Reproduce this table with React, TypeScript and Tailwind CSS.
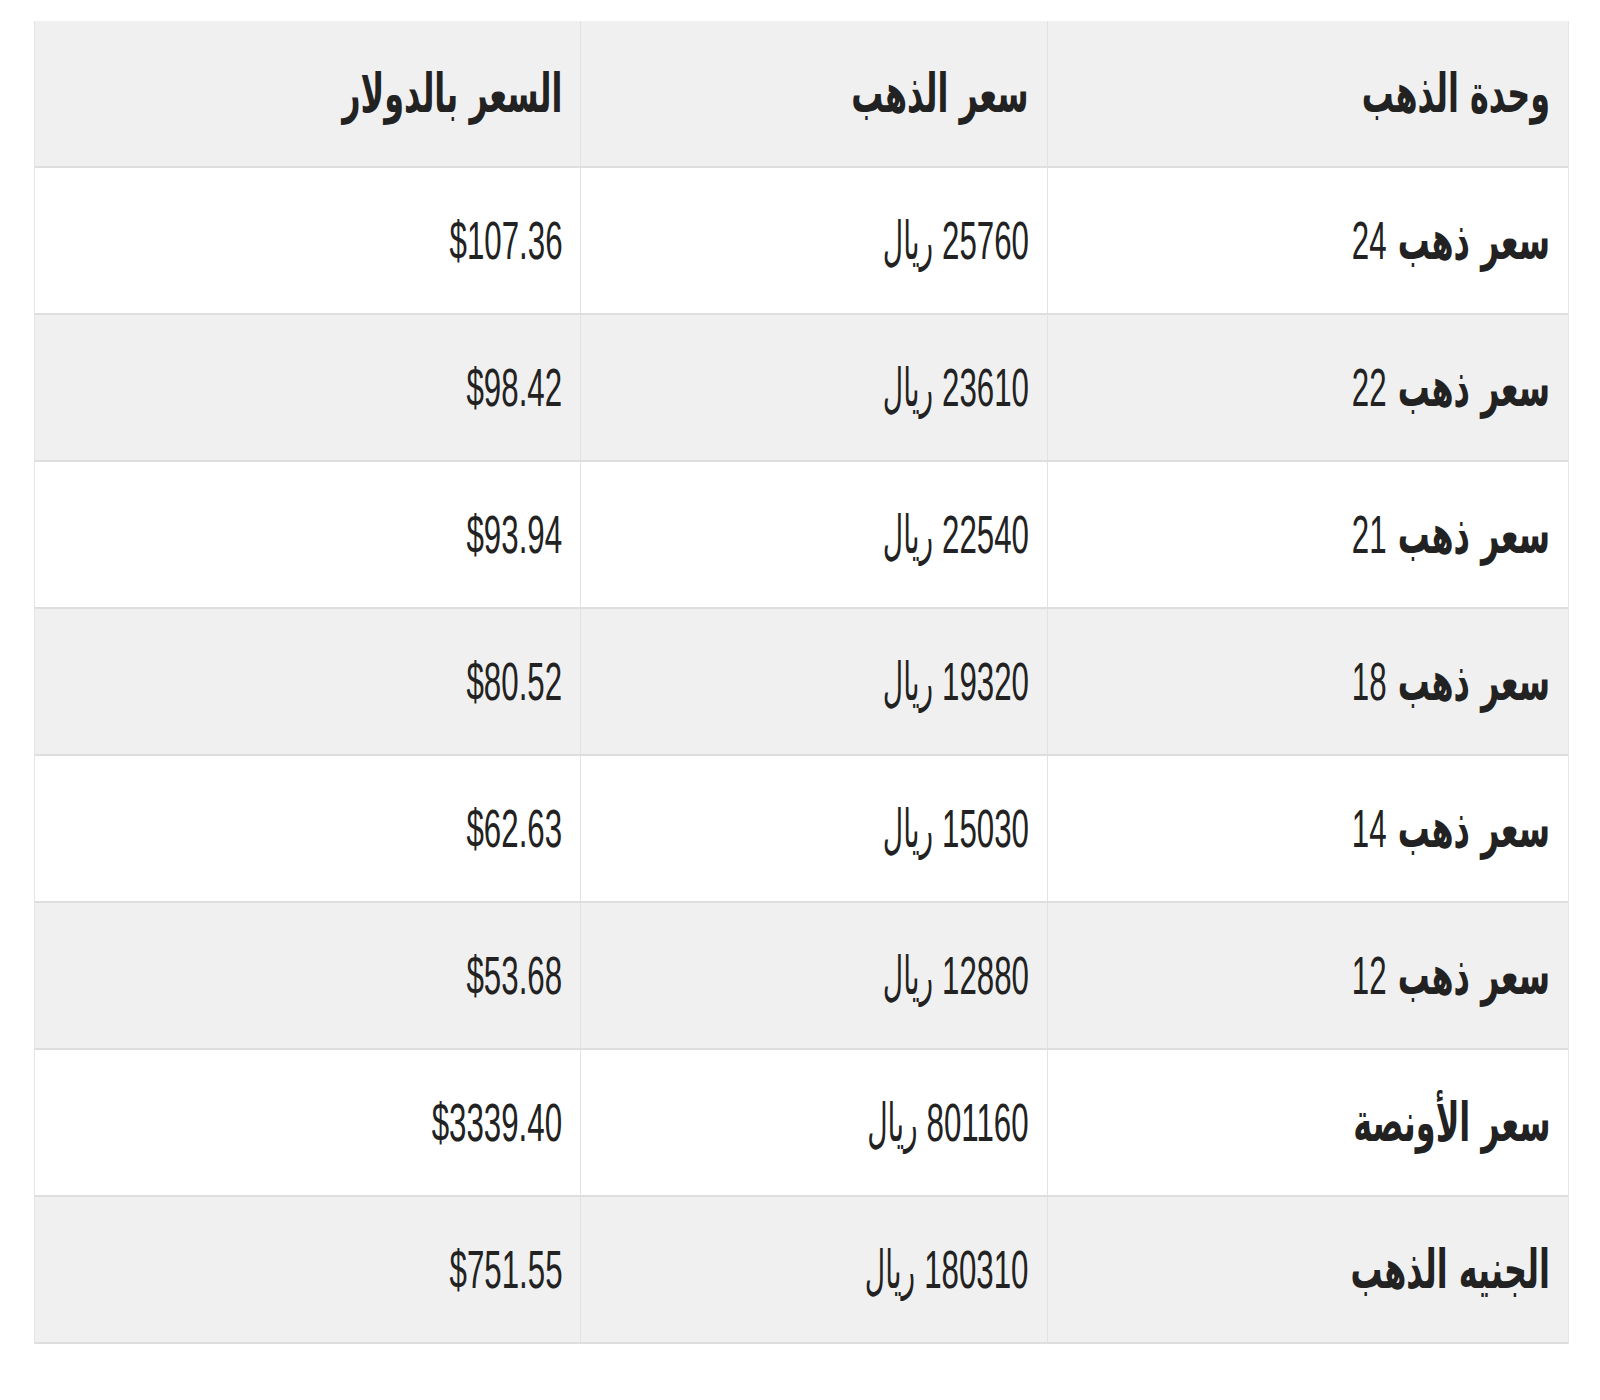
const HEAD = ['وحدة الذهب', 'سعر الذهب', 'السعر بالدولار']

const ROWS: [string, string, string][] = [
  ['سعر ذهب 24', '25760 ريال', '$107.36'],
  ['سعر ذهب 22', '23610 ريال', '$98.42'],
  ['سعر ذهب 21', '22540 ريال', '$93.94'],
  ['سعر ذهب 18', '19320 ريال', '$80.52'],
  ['سعر ذهب 14', '15030 ريال', '$62.63'],
  ['سعر ذهب 12', '12880 ريال', '$53.68'],
  ['سعر الأونصة', '801160 ريال', '$3339.40'],
  ['الجنيه الذهب', '180310 ريال', '$751.55'],
]

// numbers are drawn in an Arial-like face, Arabic words in DejaVu
function Cell({ text, w, big }: { text: string; w: string; big: boolean }) {
  const parts = text.split(/(\$?[\d.]+)/).filter(p => p !== '')
  return (
    <div className={`${w} flex items-center pr-[18px] border-l border-[#e2e2e2] last:border-l-0`}>
      <span className="inline-block origin-right scale-x-[0.59] whitespace-nowrap leading-none">
        {parts.map((p, i) =>
          /\d/.test(p) ? (
            <span key={i} dir="ltr" className="text-[53px]" style={{ fontFamily: '"Liberation Sans", Arial, sans-serif' }}>
              {p}
            </span>
          ) : big ? (
            <span key={i} className="text-[54px] font-bold" style={{ fontFamily: '"DejaVu Sans", sans-serif' }}>
              {p}
            </span>
          ) : (
            <span key={i} className="text-[53px]" style={{ fontFamily: '"DejaVu Sans Condensed", "DejaVu Sans", sans-serif' }}>
              {p}
            </span>
          )
        )}
      </span>
    </div>
  )
}

function Row({ cells, gray, head }: { cells: string[]; gray: boolean; head?: boolean }) {
  return (
    <div className={`flex h-[147px] border-b-2 border-[#dedede] ${gray ? 'bg-[#f0f0f0]' : 'bg-white'}`}>
      <Cell text={cells[0]} w="w-[522px]" big />
      <Cell text={cells[1]} w="w-[467px]" big={!!head} />
      <Cell text={cells[2]} w="w-[546px]" big={!!head} />
    </div>
  )
}

export default function App() {
  return (
    <div className="w-[1600px] h-[1400px] bg-white pt-[21px] pl-[34px]">
      <div dir="rtl" className="w-[1535px] border-x border-[#e4e4e4] text-[#222]">
        <Row cells={HEAD} gray head />
        {ROWS.map((r, i) => (
          <Row key={r[0]} cells={r} gray={i % 2 === 1} />
        ))}
      </div>
    </div>
  )
}
